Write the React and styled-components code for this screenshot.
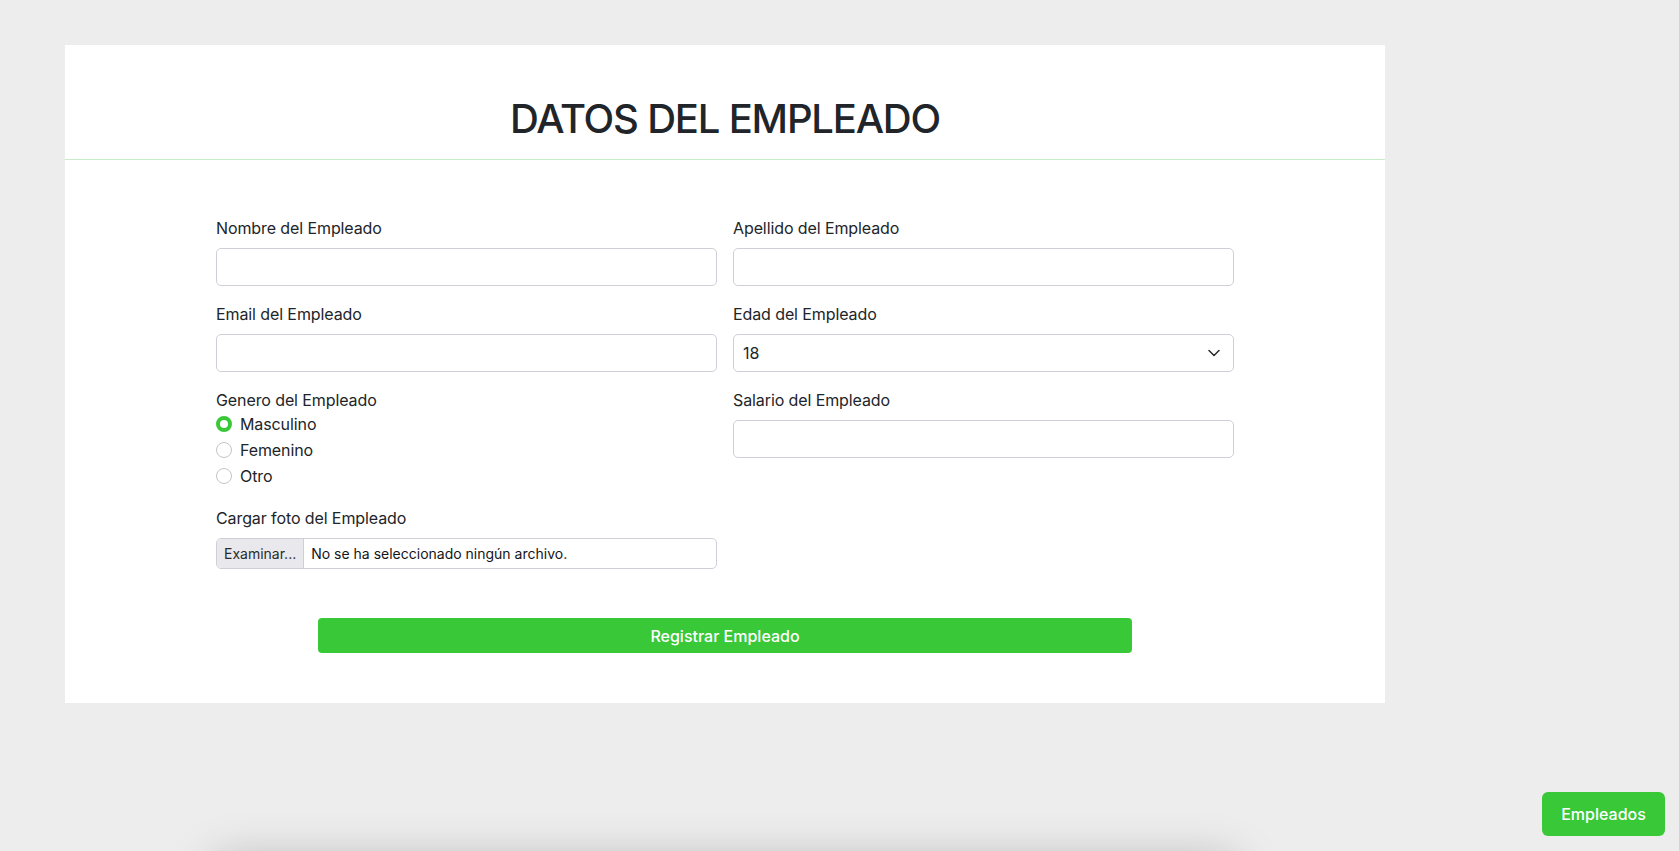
import React, { useState } from "react";
import styled, { createGlobalStyle } from "styled-components";
import { ChevronDown } from "lucide-react";

const GlobalStyle = createGlobalStyle`
  * {
    box-sizing: border-box;
  }
  body {
    margin: 0;
    background-color: #ededed;
    font-family: Inter, "Noto Sans", "Liberation Sans", sans-serif;
    color: #212529;
  }
`;

const Page = styled.div`
  padding: 45px 0 0 65px;
`;

const Card = styled.div`
  width: 1320px;
  background-color: #ffffff;
`;

const Header = styled.div`
  padding: 50px 0 16px;
  border-bottom: 1px solid #c6ecca;
  text-align: center;
`;

const Title = styled.h1`
  margin: 0;
  font-size: 40px;
  line-height: 48px;
  font-weight: 500;
  letter-spacing: -1.2px;
  color: #212529;
`;

const Form = styled.form`
  padding: 56px 0 50px;
`;

const Columns = styled.div`
  width: 1018px;
  margin: 0 auto;
  display: grid;
  grid-template-columns: 1fr 1fr;
  column-gap: 16px;
  align-items: start;
`;

const Column = styled.div`
  display: flex;
  flex-direction: column;
`;

const Field = styled.div`
  margin-bottom: 16px;
`;

const Label = styled.label`
  display: block;
  font-size: 16px;
  line-height: 24px;
  letter-spacing: -0.1px;
  margin-bottom: ${(p) => (p.$tight ? "0" : "8px")};
`;

const Input = styled.input`
  display: block;
  width: 100%;
  height: 38px;
  padding: 0 11px;
  border: 1px solid #cfcfd9;
  border-radius: 5px;
  font-family: inherit;
  font-size: 16px;
  color: #212529;
  background: #fff;
  outline: none;
`;

const SelectWrap = styled.div`
  position: relative;
`;

const Select = styled.select`
  display: block;
  width: 100%;
  height: 38px;
  padding: 0 9px;
  border: 1px solid #cfcfd9;
  border-radius: 5px;
  font-family: inherit;
  font-size: 16px;
  color: #212529;
  background: #fff;
  appearance: none;
  outline: none;
`;

const Chevron = styled(ChevronDown)`
  position: absolute;
  right: 10px;
  top: 9px;
  pointer-events: none;
  color: #2b2b2b;
`;

const RadioItem = styled.label`
  display: flex;
  align-items: center;
  gap: 8px;
  height: 24px;
  margin-bottom: 2px;
  font-size: 16px;
  letter-spacing: -0.1px;
  cursor: pointer;
`;

const Radio = styled.input`
  appearance: none;
  margin: 0;
  width: 16px;
  height: 16px;
  border-radius: 50%;
  border: 1px solid #c4c4c4;
  background: #fff;
  flex-shrink: 0;
  &:checked {
    border: 4px solid #38c838;
    background: #fff;
  }
`;

const FileBox = styled.label`
  display: flex;
  height: 31px;
  border: 1px solid #cfcfd9;
  border-radius: 5px;
  overflow: hidden;
  font-size: 14px;
  cursor: pointer;
`;

const FileButton = styled.span`
  display: flex;
  align-items: center;
  padding: 0 7px;
  background-color: #e9e9ed;
  border-right: 1px solid #cfcfd9;
  color: #2b2b2b;
`;

const FileName = styled.span`
  display: flex;
  align-items: center;
  padding: 0 7px;
  color: #15141a;
`;

const SubmitButton = styled.button`
  display: block;
  width: 814px;
  height: 35px;
  margin: 33px auto 0;
  border: none;
  border-radius: 4px;
  background-color: #38c838;
  color: #ffffff;
  font-family: inherit;
  font-size: 16px;
  font-weight: 500;
  cursor: pointer;
`;

const ListShadow = styled.div`
  width: 1019px;
  height: 300px;
  margin: 160px 0 0 150px;
  background: #ffffff;
  box-shadow: 0 0 45px rgba(0, 0, 0, 0.28);
`;

const FloatingButton = styled.button`
  position: fixed;
  right: 14px;
  bottom: 15px;
  width: 123px;
  height: 44px;
  border: none;
  border-radius: 6px;
  background-color: #38c838;
  color: #ffffff;
  font-family: inherit;
  font-size: 16px;
  font-weight: 500;
  cursor: pointer;
`;

const ages = Array.from({ length: 48 }, (_, i) => 18 + i);

function App() {
  const [gender, setGender] = useState("Masculino");

  return (
    <Page>
      <GlobalStyle />
      <Card>
        <Header>
          <Title>DATOS DEL EMPLEADO</Title>
        </Header>
        <Form onSubmit={(e) => e.preventDefault()}>
          <Columns>
            <Column>
              <Field>
                <Label>Nombre del Empleado</Label>
                <Input type="text" />
              </Field>
              <Field>
                <Label>Email del Empleado</Label>
                <Input type="email" />
              </Field>
              <Field>
                <Label $tight>Genero del Empleado</Label>
                {["Masculino", "Femenino", "Otro"].map((g) => (
                  <RadioItem key={g}>
                    <Radio
                      type="radio"
                      name="genero"
                      checked={gender === g}
                      onChange={() => setGender(g)}
                    />
                    {g}
                  </RadioItem>
                ))}
              </Field>
              <Field>
                <Label>Cargar foto del Empleado</Label>
                <FileBox>
                  <FileButton>Examinar...</FileButton>
                  <FileName>No se ha seleccionado ningún archivo.</FileName>
                </FileBox>
              </Field>
            </Column>
            <Column>
              <Field>
                <Label>Apellido del Empleado</Label>
                <Input type="text" />
              </Field>
              <Field>
                <Label>Edad del Empleado</Label>
                <SelectWrap>
                  <Select defaultValue="18">
                    {ages.map((a) => (
                      <option key={a} value={a}>
                        {a}
                      </option>
                    ))}
                  </Select>
                  <Chevron size={20} strokeWidth={1.8} />
                </SelectWrap>
              </Field>
              <Field>
                <Label>Salario del Empleado</Label>
                <Input type="text" />
              </Field>
            </Column>
          </Columns>
          <SubmitButton type="submit">Registrar Empleado</SubmitButton>
        </Form>
      </Card>
      <ListShadow />
      <FloatingButton>Empleados</FloatingButton>
    </Page>
  );
}

export default App;
